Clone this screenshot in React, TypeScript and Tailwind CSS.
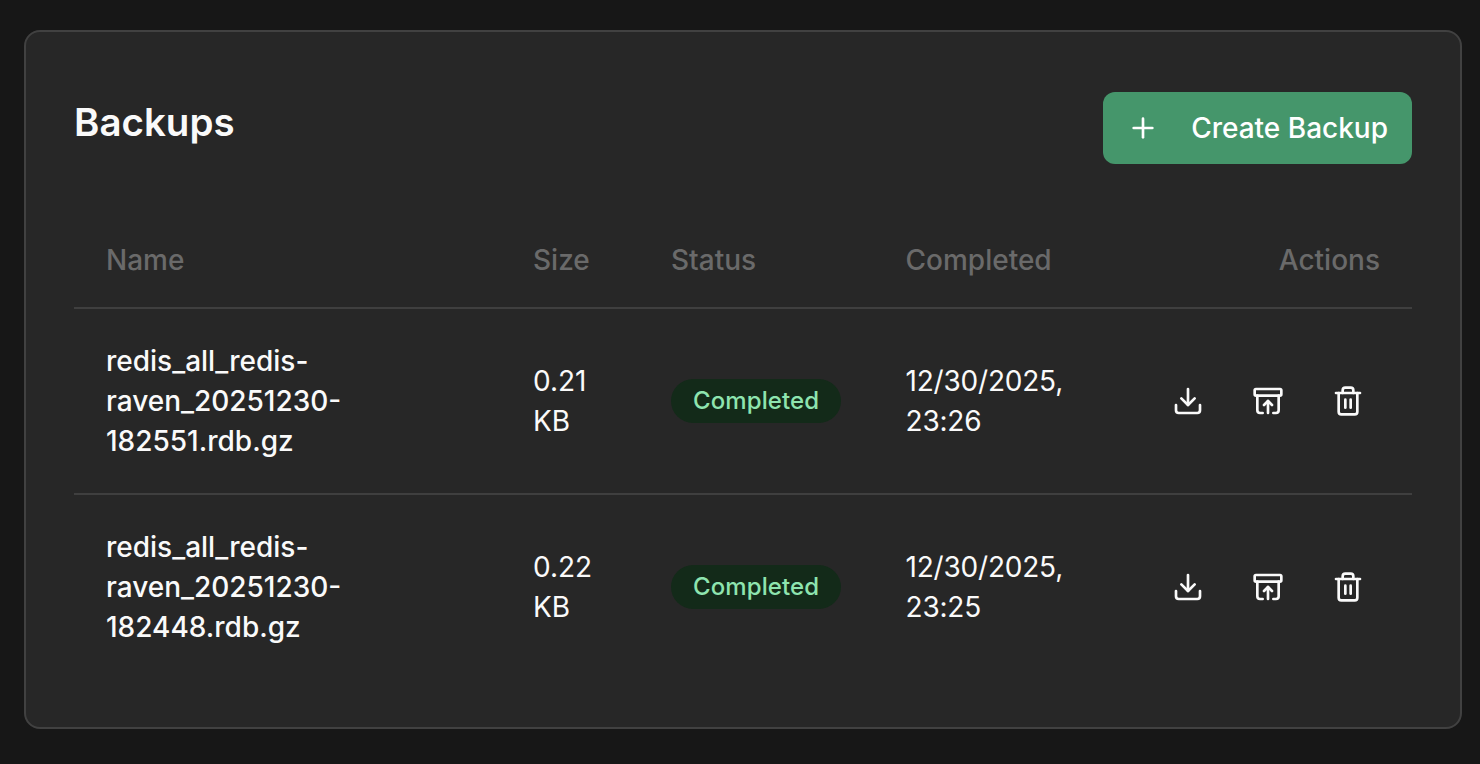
import React from 'react';
import { Plus, Download, ArchiveRestore, Trash2 } from 'lucide-react';

const backups = [
  { id: 1, name: ['redis_all_redis-', 'raven_20251230-', '182551.rdb.gz'], size: '0.21', date: '12/30/2025,', time: '23:26' },
  { id: 2, name: ['redis_all_redis-', 'raven_20251230-', '182448.rdb.gz'], size: '0.22', date: '12/30/2025,', time: '23:25' },
];

export default function App() {
  return (
    <div className="min-h-screen bg-[#171717] pt-[30px] pl-6 pr-[18px] font-['Inter',sans-serif] text-[#fafafa]">
      <div className="rounded-[16px] border-2 border-[#414141] bg-[#272727] px-[48px] pt-[60px] pb-[48px]">
        <div className="mb-10 flex items-start justify-between">
          <h2 className="text-[38.5px] font-semibold leading-[60px]">Backups</h2>
          <button className="flex h-[72px] items-center gap-8 rounded-[12px] bg-[#45966b] px-6 text-[28px] font-medium text-white">
            <Plus size={32} />
            Create Backup
          </button>
        </div>

        <table className="w-full table-fixed border-collapse text-left text-[28px] leading-[40px]">
          <colgroup>
            <col className="w-[427px]" />
            <col className="w-[138px]" />
            <col className="w-[234.5px]" />
            <col />
          </colgroup>
          <thead>
            <tr className="border-b-2 border-[#3f3f3f] text-[#6a6a6a]">
              <th className="px-8 pt-9 pb-[27px] font-medium">Name</th>
              <th className="px-8 pt-9 pb-[27px] font-medium">Size</th>
              <th className="px-8 pt-9 pb-[27px] font-medium">Status</th>
              <th className="px-8 pt-9 pb-[27px] font-medium">Completed</th>
              <th className="px-8 pt-9 pb-[27px] text-right font-medium">Actions</th>
            </tr>
          </thead>
          <tbody>
            {backups.map((b, i) => (
              <tr key={b.id} className={i === 0 ? 'border-b-2 border-[#3f3f3f]' : ''}>
                <td className="px-8 py-8 font-medium">
                  {b.name.map((part) => (
                    <div key={part}>{part}</div>
                  ))}
                </td>
                <td className="px-8 py-8">
                  <div>{b.size}</div>
                  <div>KB</div>
                </td>
                <td className="px-8 py-8">
                  <span className="inline-flex h-[44px] items-center rounded-full bg-[#132a19] px-[22px] text-[24px] font-medium tracking-[0.1px] text-[#8ee4af]">
                    Completed
                  </span>
                </td>
                <td className="px-8 py-8 tracking-[-0.2px]">
                  <div>{b.date}</div>
                  <div>{b.time}</div>
                </td>
                <td className="py-8 pr-8">
                  <div className="flex justify-end gap-4">
                    <button className="flex h-16 w-16 shrink-0 items-center justify-center"><Download size={32} /></button>
                    <button className="flex h-16 w-16 shrink-0 items-center justify-center"><ArchiveRestore size={32} /></button>
                    <button className="flex h-16 w-16 shrink-0 items-center justify-center"><Trash2 size={32} /></button>
                  </div>
                </td>
              </tr>
            ))}
          </tbody>
        </table>
      </div>
    </div>
  );
}
